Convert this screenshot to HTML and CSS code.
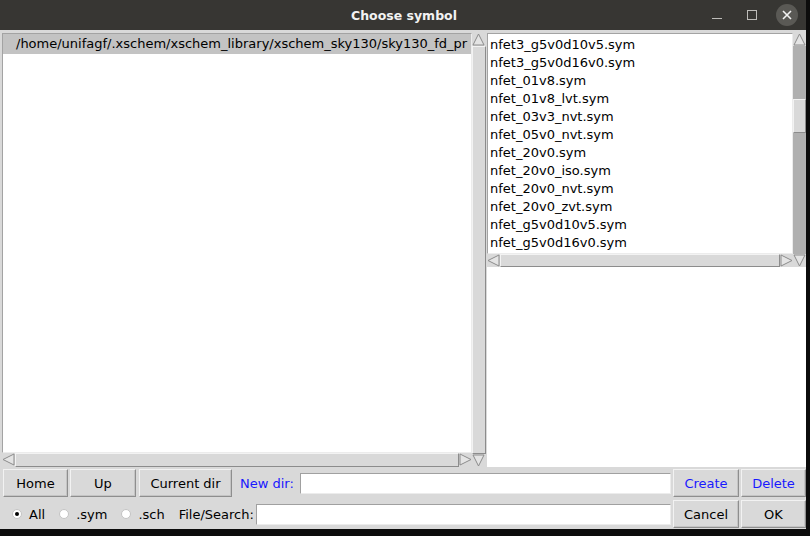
FILE: index.html
```html
<!DOCTYPE html>
<html lang="en">
  <head>
    <meta charset="UTF-8" />
    <title>Choose symbol</title>
    <link rel="stylesheet" href="styles.css">
  </head>
  <body>
    <div class="window">
      <div class="titlebar">
        <span></span>
        <span class="title">Choose symbol</span>
        <div class="controls">
          <span class="ctl"><svg width="12" height="12"><line x1="1" y1="9.5" x2="11" y2="9.5" stroke="#bdbcb9" stroke-width="1"/></svg></span>
          <span class="ctl"><svg width="12" height="12"><rect x="1.5" y="1.5" width="9" height="9" fill="none" stroke="#bdbcb9" stroke-width="1"/></svg></span>
          <span class="ctl close"><svg width="12" height="12"><path d="M2 2 L10 10 M10 2 L2 10" stroke="#f2f2f2" stroke-width="1.6"/></svg></span>
        </div>
      </div>

      <div class="content">
        <div class="panes">
          <div class="pane left">
            <div class="listbox dirs">
              <div class="item selected">/home/unifagf/.xschem/xschem_library/xschem_sky130/sky130_fd_pr</div>
            </div>
            <div class="vscroll">
              <svg class="arrow" width="13" height="13"><polygon points="6.5,1 12,12 1,12" fill="#e4e4e4" stroke="#8c8c8c"/></svg>
              <div class="trough"><div class="thumb full"></div></div>
              <svg class="arrow" width="13" height="13"><polygon points="1,1 12,1 6.5,12" fill="#e4e4e4" stroke="#8c8c8c"/></svg>
            </div>
            <div class="hscroll">
              <svg class="arrow" width="13" height="13"><polygon points="1,6.5 12,1 12,12" fill="#e4e4e4" stroke="#8c8c8c"/></svg>
              <div class="trough"><div class="thumb full"></div></div>
              <svg class="arrow" width="13" height="13"><polygon points="1,1 12,6.5 1,12" fill="#e4e4e4" stroke="#8c8c8c"/></svg>
            </div>
          </div>

          <div class="pane right">
            <div class="files">
              <div class="listbox syms">
                <div class="item">nfet3_g5v0d10v5.sym</div>
                <div class="item">nfet3_g5v0d16v0.sym</div>
                <div class="item">nfet_01v8.sym</div>
                <div class="item">nfet_01v8_lvt.sym</div>
                <div class="item">nfet_03v3_nvt.sym</div>
                <div class="item">nfet_05v0_nvt.sym</div>
                <div class="item">nfet_20v0.sym</div>
                <div class="item">nfet_20v0_iso.sym</div>
                <div class="item">nfet_20v0_nvt.sym</div>
                <div class="item">nfet_20v0_zvt.sym</div>
                <div class="item">nfet_g5v0d10v5.sym</div>
                <div class="item">nfet_g5v0d16v0.sym</div>
              </div>
              <div class="vscroll dark">
                <svg class="arrow" width="13" height="13"><polygon points="6.5,1 12,12 1,12" fill="#e4e4e4" stroke="#8c8c8c"/></svg>
                <div class="trough"><div class="thumb" style="margin-top: 53px; height: 32px;"></div></div>
                <svg class="arrow" width="13" height="13"><polygon points="1,1 12,1 6.5,12" fill="#e4e4e4" stroke="#8c8c8c"/></svg>
              </div>
              <div class="hscroll">
                <svg class="arrow" width="13" height="13"><polygon points="1,6.5 12,1 12,12" fill="#e4e4e4" stroke="#8c8c8c"/></svg>
                <div class="trough"><div class="thumb full"></div></div>
                <svg class="arrow" width="13" height="13"><polygon points="1,1 12,6.5 1,12" fill="#e4e4e4" stroke="#8c8c8c"/></svg>
              </div>
            </div>
            <div class="preview"></div>
          </div>
        </div>

        <div class="row">
          <button class="btn home">Home</button>
          <button class="btn up">Up</button>
          <button class="btn cur">Current dir</button>
          <span class="label blue">New dir:</span>
          <input type="text" class="entry" />
          <button class="btn small blue">Create</button>
          <button class="btn small blue">Delete</button>
        </div>

        <div class="row second">
          <label class="radio"><span class="dot on"></span>All</label>
          <label class="radio"><span class="dot"></span>.sym</label>
          <label class="radio"><span class="dot"></span>.sch</label>
          <span class="label search">File/Search:</span>
          <input type="text" class="entry" />
          <button class="btn small">Cancel</button>
          <button class="btn small">OK</button>
        </div>
      </div>
    </div>
  </body>
</html>
```

FILE: styles.css
```css
body {
  margin: 0;
  background: #0c0c0c;
  font-family: "DejaVu Sans", sans-serif;
  font-size: 13px;
  color: #000;
}

.window {
  width: 806px;
  height: 529px;
  display: flex;
  flex-direction: column;
}

.titlebar {
  height: 30px;
  background: #373633;
  display: grid;
  grid-template-columns: 1fr auto 1fr;
  align-items: center;
}
.title {
  color: #f2f2f2;
  font-weight: bold;
  font-size: 12.5px;
  padding-left: 2px;
}
.controls {
  display: flex;
  justify-content: flex-end;
  align-items: center;
  padding-right: 8px;
}
.ctl {
  width: 22px;
  height: 22px;
  display: flex;
  align-items: center;
  justify-content: center;
}
.ctl + .ctl {
  margin-left: 13px;
}
.close {
  border-radius: 50%;
  background: #5a5955;
}

.content {
  flex: 1;
  background: #d9d9d9;
  display: flex;
  flex-direction: column;
}

.panes {
  display: flex;
  gap: 1px;
  margin-top: 3px;
  height: 434px;
}
.pane.left {
  margin-left: 2px;
  width: 484px;
  display: grid;
  grid-template-columns: 470px 14px;
  grid-template-rows: 420px 14px;
}
.pane.right {
  flex: 1;
  display: flex;
  flex-direction: column;
}
.files {
  display: grid;
  grid-template-columns: 306px 13px;
  grid-template-rows: 221px 13px;
}
.preview {
  flex: 1;
  background: #fff;
}

.listbox {
  background: #fff;
  border-top: 1px solid #a3a3a3;
  border-left: 1px solid #a3a3a3;
  border-right: 1px solid #ececec;
  border-bottom: 1px solid #ececec;
  overflow: hidden;
}
.listbox.syms {
  padding-top: 2px;
}
.item {
  line-height: 18px;
  white-space: nowrap;
  padding-left: 2px;
}
.item.selected {
  background: #c3c3c3;
  line-height: 20px;
  padding-left: 13px;
}

.vscroll {
  grid-row: 1 / 3;
  grid-column: 2;
  display: flex;
  flex-direction: column;
  background: #d9d9d9;
}
.hscroll {
  grid-row: 2;
  grid-column: 1;
  display: flex;
  background: #d9d9d9;
}
.arrow {
  display: block;
  flex: none;
}
.trough {
  flex: 1;
  display: flex;
  flex-direction: column;
}
.hscroll .trough {
  flex-direction: row;
}
.vscroll.dark .trough {
  background: #b0b0b0;
}
.thumb {
  background: #d9d9d9;
  border-top: 1px solid #f3f3f3;
  border-left: 1px solid #f3f3f3;
  border-right: 1px solid #8c8c8c;
  border-bottom: 1px solid #8c8c8c;
}
.thumb.full {
  flex: 1;
}

.row {
  display: flex;
  align-items: center;
  height: 30px;
  margin-top: 1px;
  padding-left: 3px;
}

.btn {
  font-family: "DejaVu Sans", sans-serif;
  font-size: 13px;
  color: #000;
  background: #d9d9d9;
  height: 28px;
  padding: 0;
  border: 1px solid;
  border-color: #f2f2f2 #8e8e8e #8e8e8e #f2f2f2;
  box-shadow: inset -1px -1px 0 #c4c4c4;
}
.btn.home { width: 65px; }
.btn.up { width: 66px; margin-left: 2px; }
.btn.cur { width: 93px; margin-left: 3px; }
.btn.small { width: 66px; margin-left: 2px; }
.btn.small:last-child { width: 65px; }

.blue {
  color: #1818ff;
}
.label {
  margin-left: 8px;
  margin-right: 6px;
  white-space: nowrap;
}
.label.search {
  margin-left: 0;
  margin-right: 2px;
}

.entry {
  flex: 1;
  height: 21px;
  box-sizing: border-box;
  margin: 0;
  padding: 0 2px;
  background: #fff;
  border: 1px solid;
  border-color: #a0a0a0 #ececec #ececec #a0a0a0;
  outline: none;
}

.radio {
  display: flex;
  align-items: center;
  margin-right: 14px;
}
.radio:first-child {
  margin-left: 9px;
}
.dot {
  width: 10px;
  height: 10px;
  box-sizing: border-box;
  border-radius: 50%;
  background: #fff;
  border: 1px solid #c4c4c4;
  margin-right: 7px;
  display: flex;
  align-items: center;
  justify-content: center;
}
.dot.on::after {
  content: "";
  width: 4px;
  height: 4px;
  border-radius: 50%;
  background: #000;
}
```
